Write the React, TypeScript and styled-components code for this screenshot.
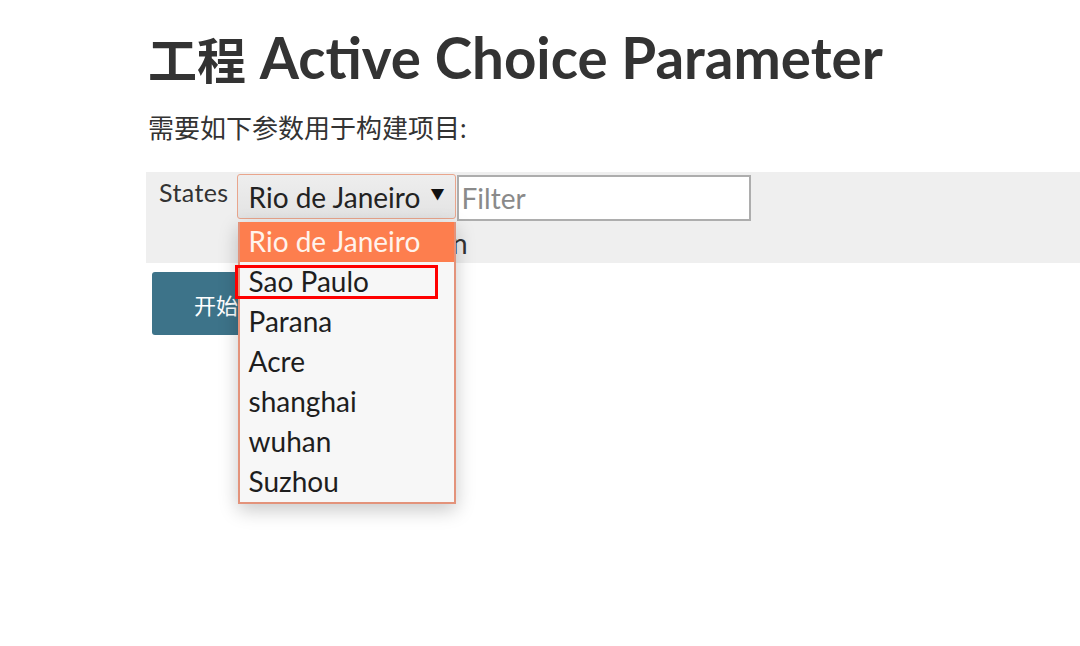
import React from "react";
import styled, { createGlobalStyle } from "styled-components";

const FONT = `Lato, "Noto Sans CJK SC", sans-serif`;

const GlobalStyle = createGlobalStyle`
  html, body { margin: 0; padding: 0; background: #ffffff; }
  body {
    font-family: ${FONT};
    color: #333333;
  }
`;

const Page = styled.div`
  position: relative;
  width: 1080px;
  height: 646px;
  overflow: hidden;
  padding: 21px 0 0 146px;
  box-sizing: border-box;
`;

const Title = styled.h1`
  margin: 0 0 0 2px;
  height: 72px;
  font-size: 56.5px;
  line-height: 72px;
  font-weight: 700;
  color: #333333;
  white-space: nowrap;
`;

const TitleCjk = styled.span`
  font-size: 49px;
  font-family: "Noto Sans CJK SC", sans-serif;
`;

const Intro = styled.p`
  margin: 17px 0 0 2px;
  font-size: 26px;
  line-height: 36px;
  color: #333333;
`;

const ParamBand = styled.div`
  margin-top: 26px;
  background: #efefef;
  height: 91px;
  display: flex;
  align-items: flex-start;
  gap: 8px;
  padding: 2px 0 0 13px;
  box-sizing: border-box;
`;

const Label = styled.div`
  font-size: 25px;
  line-height: 30px;
  padding-top: 3px;
  letter-spacing: 0.4px;
  color: #333333;
`;

const ValueCell = styled.div`
  display: flex;
  flex-direction: column;
`;

const Controls = styled.div`
  position: relative;
  display: flex;
  align-items: flex-start;
`;

const SelectBox = styled.div`
  width: 219px;
  height: 45px;
  box-sizing: border-box;
  border: 1px solid #e9a58c;
  border-radius: 3px;
  background: linear-gradient(#eeeeee, #e3e3e3);
  display: flex;
  align-items: center;
  justify-content: space-between;
  padding: 0 10px 0 11px;
  font-size: 28px;
  color: #222222;
`;

const Arrow = styled.span`
  font-size: 14px;
  margin-top: -8px;
  color: #111111;
`;

const FilterInput = styled.input`
  margin: 1px 0 0 1px;
  width: 294px;
  height: 46px;
  box-sizing: border-box;
  border: 2px solid #adadad;
  background: #ffffff;
  font-family: ${FONT};
  font-size: 28px;
  padding: 0 3px;
  outline: none;
  &::placeholder { color: #8a8a8a; }
`;

const Description = styled.div`
  width: 231px;
  text-align: right;
  font-size: 28px;
  line-height: 34px;
  padding-top: 5px;
  color: #333333;
  white-space: nowrap;
`;

const Dropdown = styled.ul`
  position: absolute;
  top: 48px;
  left: 1px;
  width: 218px;
  margin: 0;
  padding: 0;
  list-style: none;
  box-sizing: border-box;
  border: 2px solid #e3937b;
  border-top: none;
  background: #f7f7f7;
  box-shadow: 0 6px 18px rgba(0, 0, 0, 0.22);
  z-index: 5;
`;

const Option = styled.li<{ $active?: boolean }>`
  height: 40px;
  line-height: 39px;
  padding-left: 9px;
  font-size: 28px;
  color: ${(p) => (p.$active ? "#fff3ec" : "#1e1e1e")};
  background: ${(p) => (p.$active ? "#fd7e4e" : "transparent")};
`;

const Highlight = styled.div`
  position: absolute;
  left: -5px;
  top: 43px;
  width: 203px;
  height: 34px;
  box-sizing: border-box;
  border: 3px solid #ff0000;
  pointer-events: none;
`;

const BuildButton = styled.button`
  margin: 9px 0 0 6px;
  height: 63px;
  padding: 0 42px;
  border: none;
  border-radius: 3px;
  background: #3d7389;
  color: #ffffff;
  font-family: "Noto Sans CJK SC", sans-serif;
  font-size: 22px;
`;

const options = ["Rio de Janeiro", "Sao Paulo", "Parana", "Acre", "shanghai", "wuhan", "Suzhou"];

export default function App() {
  return (
    <>
      <GlobalStyle />
      <Page>
        <Title>
          <TitleCjk>工程</TitleCjk> Active Choice Parameter
        </Title>
        <Intro>需要如下参数用于构建项目:</Intro>
        <ParamBand>
          <Label>States</Label>
          <ValueCell>
            <Controls>
              <SelectBox>
                <span>Rio de Janeiro</span>
                <Arrow>▼</Arrow>
              </SelectBox>
              <FilterInput placeholder="Filter" />
              <Dropdown>
                {options.map((o, i) => (
                  <Option key={o} $active={i === 0}>
                    {o}
                  </Option>
                ))}
                <Highlight />
              </Dropdown>
            </Controls>
            <Description>Choose a region</Description>
          </ValueCell>
        </ParamBand>
        <BuildButton>开始构建</BuildButton>
      </Page>
    </>
  );
}
